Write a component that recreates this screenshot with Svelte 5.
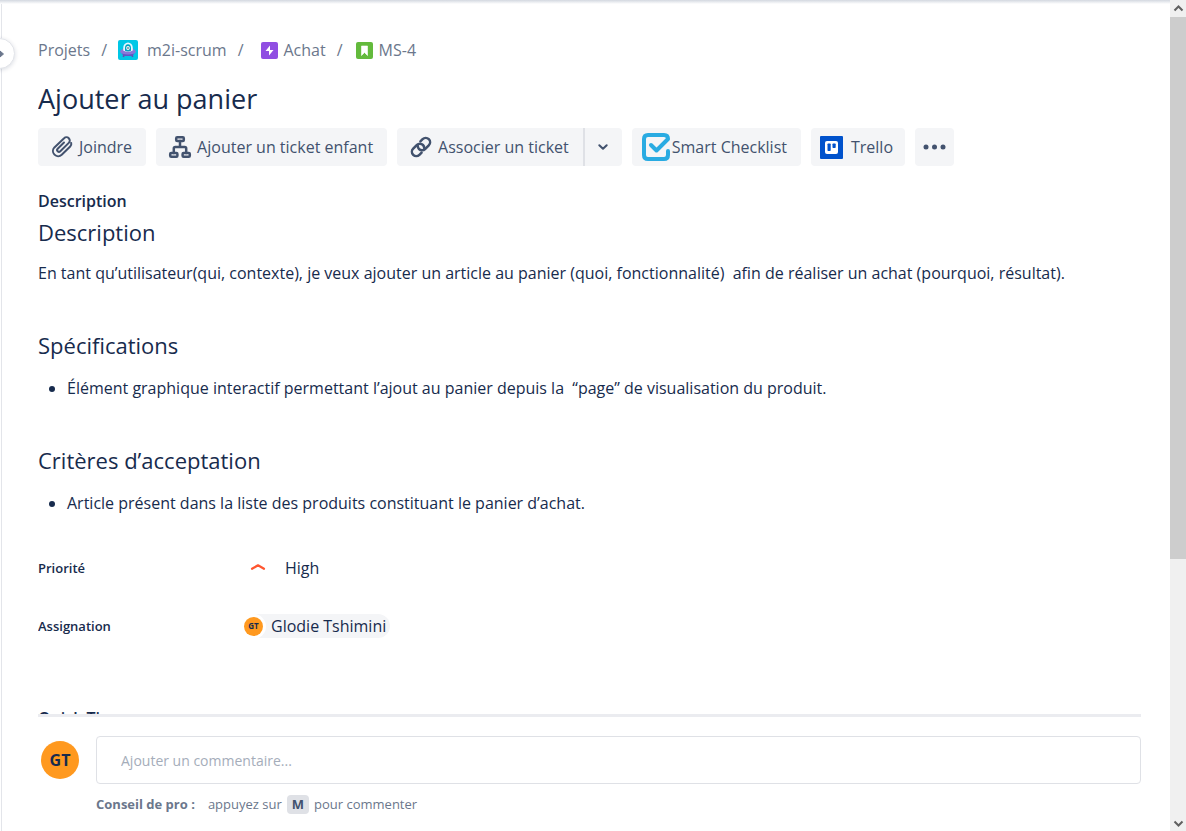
<script>
  let comment = $state('');
</script>

<div class="shell">
  <div class="rail">
    <button class="toggle" aria-label="Développer la barre latérale">
      <svg width="8" height="10" viewBox="0 0 8 10"><path d="M0 2v6l3.500-3z" /></svg>
    </button>
  </div>

  <main>
    <div class="content">
      <nav class="crumbs" aria-label="Fil d’Ariane">
        <a href="#projets">Projets</a>
        <span class="sep">/</span>
        <a class="project" href="#m2i">
          <svg width="20" height="20" viewBox="0 0 20 20">
            <rect width="20" height="20" rx="2" fill="#00c7e6" />
            <path d="M6 14l-.6 3M14 14l.6 3" stroke="#5e4db2" stroke-width="1.600" />
            <ellipse cx="10" cy="11.500" rx="7.800" ry="3.600" fill="#8777d9" />
            <path d="M3.500 13.500q6.500 2 13 0L14 16H6z" fill="#6554c0" />
            <path d="M5.200 10.500V8a4.800 5.500 0 0 1 9.600 0v2.500q-4.800 2.500-9.600 0z" fill="#eaf6ff" />
            <path d="M7 10.800V8a3 3.800 0 0 1 6 0v2.800q-3 1.200-6 0z" fill="#00a3bf" />
            <ellipse cx="10" cy="8" rx="1.800" ry="2.100" fill="#fff" />
            <circle cx="10" cy="8" r=".8" fill="#253858" />
          </svg>
          m2i-scrum
        </a>
        <span class="sep">/</span>
        <a class="ticket epic" href="#achat">
          <svg width="17" height="17" viewBox="0 0 17 17">
            <rect width="17" height="17" rx="2" fill="#904ee2" />
            <path d="M9 3.500 4.500 9H8v4.500L12.500 8H9z" fill="#fff" />
          </svg>
          Achat
        </a>
        <span class="sep">/</span>
        <a class="ticket story" href="#ms-4">
          <svg width="17" height="17" viewBox="0 0 17 17">
            <rect width="17" height="17" rx="2" fill="#63ba3c" />
            <path d="M5.500 4h6v9.500l-3-3-3 3z" fill="#fff" stroke="#fff" stroke-linejoin="round" stroke-width=".6" />
          </svg>
          MS-4
        </a>
      </nav>

      <h1>Ajouter au panier</h1>

      <div class="actions">
        <button class="action">
          <svg width="24" height="24" viewBox="0 0 24 24" class="line">
            <path d="M14 7.500 7.700 13.700a1.800 1.800 0 0 0 2.600 2.600l8.500-8.400a3.300 3.300 0 0 0-4.700-4.700L4.400 12.400a5.200 5.200 0 0 0 7.300 7.400l8.500-8.300q1.500-1.500 1-3.500" />
          </svg>
          Joindre
        </button>
        <button class="action">
          <svg width="24" height="24" viewBox="0 0 24 24" class="line tree">
            <rect x="8.200" y="2.200" width="7.600" height="3.800" rx="1" />
            <rect x="2.200" y="18" width="7.200" height="3.800" rx="1" />
            <rect x="14.600" y="18" width="7.200" height="3.800" rx="1" />
            <path d="M12 6v6M5.800 18v-4.500q0-1.500 1.500-1.500h9.400q1.500 0 1.500 1.500V18" />
          </svg>
          Ajouter un ticket enfant
        </button>
        <div class="split">
          <button class="action">
            <svg width="24" height="24" viewBox="0 0 24 24" class="line link">
              <path d="M12.600 17.600 10.400 19.800a4.300 4.300 0 0 1-6.200-6.200l3.700-3.600a4.300 4.300 0 0 1 6.100 0q1.200 1.200 1.200 3" />
              <path d="M11.400 6.400 13.600 4.200a4.300 4.300 0 0 1 6.200 6.200l-3.700 3.600a4.300 4.300 0 0 1-6.100 0q-1.200-1.200-1.200-3" />
            </svg>
            Associer un ticket
          </button>
          <button class="more" aria-label="Autres options d’association">
            <svg width="12" height="8" viewBox="0 0 12 8" class="line"><path d="M2.300 2.200 6 5.800l3.700-3.600" /></svg>
          </button>
        </div>
        <button class="action smart">
          <svg width="28" height="28" viewBox="0 0 28 28" fill="none" stroke="#29abe2" stroke-linecap="round" stroke-linejoin="round" stroke-width="4">
            <path d="M26 18v4q0 4-4 4H6q-4 0-4-4V6q0-4 4-4h16q4 0 4 4L14.500 17.500 9 12" />
          </svg>
          Smart Checklist
        </button>
        <button class="action trello">
          <svg width="23" height="23" viewBox="0 0 23 23">
            <rect width="23" height="23" rx="1" fill="#0052cc" />
            <rect x="5" y="5" width="13" height="13" rx="2" fill="#fff" />
            <rect x="7.500" y="7.500" width="3.200" height="7.500" rx=".7" fill="#0052cc" />
            <rect x="12.500" y="7.500" width="3.200" height="4.500" rx=".7" fill="#0052cc" />
          </svg>
          Trello
        </button>
        <button class="more" aria-label="Autres actions">
          <svg width="23" height="6" viewBox="0 0 23 6" fill="#42526e">
            <circle cx="3" cy="3" r="2.500" /><circle cx="11.500" cy="3" r="2.500" /><circle cx="20" cy="3" r="2.500" />
          </svg>
        </button>
      </div>

      <h2 class="label">Description</h2>
      <section class="first">
        <h3>Description</h3>
        <p>En tant qu’utilisateur(qui, contexte), je veux ajouter un article au panier (quoi, fonctionnalité)&nbsp; afin de réaliser un achat (pourquoi, résultat).</p>
      </section>
      <section>
        <h3>Spécifications</h3>
        <ul><li>Élément graphique interactif permettant l’ajout au panier depuis la&nbsp; “page” de visualisation du produit.</li></ul>
      </section>
      <section>
        <h3>Critères d’acceptation</h3>
        <ul><li>Article présent dans la liste des produits constituant le panier d’achat.</li></ul>
      </section>

      <dl>
        <dt>Priorité</dt>
        <dd class="priority">
          <svg width="16" height="10" viewBox="0 0 16 10"><path d="M2 5.800 8 2.300l6 3.500" fill="none" stroke="#ff5630" stroke-width="2.200" stroke-linecap="round" stroke-linejoin="round" /></svg>
          High
        </dd>
        <dt>Assignation</dt>
        <dd><span class="person"><span class="avatar small">GT</span>Glodie Tshimini</span></dd>
      </dl>
      <h2 class="label tips">Quick Tips</h2>
    </div>

    <footer>
      <span class="avatar">GT</span>
      <div class="composer">
        <input type="text" aria-label="Commentaire" placeholder="Ajouter un commentaire..." bind:value={comment} />
        <div class="hint"><strong>Conseil de pro :</strong><span>appuyez sur</span><kbd>M</kbd><span>pour commenter</span></div>
      </div>
    </footer>
  </main>

  <div class="scrollbar" aria-hidden="true">
    <svg width="16" height="17" viewBox="0 0 16 17"><path d="M4.500 10.500 8.500 6.500l4 4" /></svg>
    <div class="track"><div class="thumb"></div></div>
    <svg width="16" height="17" viewBox="0 0 16 17"><path d="M4.500 7.500l4 4 4-4" /></svg>
  </div>
</div>

<style>
  :global(body) { margin: 0; }
  .shell {
    position: relative;
    display: flex;
    height: 100vh;
    overflow: hidden;
    background: #fff;
    color: #172b4d;
    font: 16px/24px "Open Sans", "Noto Sans", sans-serif;
  }
  .shell::before {
    content: "";
    position: absolute;
    inset: 0 16px auto 0;
    height: 4px;
    background: linear-gradient(#d3d8e0, #fff);
  }
  .rail { flex: none; width: 1px; border-right: 1px solid #e3e5ea; }
  .toggle {
    position: absolute;
    left: -16px;
    top: 38px;
    width: 31px;
    height: 31px;
    padding: 0 0 0 15px;
    display: flex;
    align-items: center;
    border: 1px solid #e3e5ea;
    border-radius: 50%;
    background: #fff;
    box-shadow: 0 1px 4px #091e4226;
  }
  .toggle path { fill: #6b778c; stroke: #6b778c; stroke-linejoin: round; }
  svg { flex: none; }
  main { flex: 1; min-width: 0; display: flex; flex-direction: column; padding: 0 29px 0 36px; }
  .content { flex: 1; min-height: 0; overflow: hidden; padding-top: 38px; box-sizing: border-box; }
  .crumbs { display: flex; align-items: center; color: #6b778c; }
  .crumbs a { display: flex; align-items: center; color: inherit; text-decoration: none; }
  .sep { margin: 0 11px; }
  .project { gap: 9px; }
  .ticket { gap: 6px; }
  .epic { margin-left: 6px; }
  .story { margin-left: 2px; }
  h1, h2, h3, p, ul, dl, dd { margin: 0; }
  h1 { margin-top: 19px; font-size: 27px; line-height: 36px; font-weight: 400; }
  .actions { display: flex; gap: 10px; margin-top: 11px; }
  button { font: inherit; color: #42526e; cursor: pointer; }
  .action, .more {
    display: flex;
    align-items: center;
    justify-content: center;
    gap: 5px;
    height: 38px;
    padding: 0 14px 0 12px;
    border: 0;
    border-radius: 4px;
    background: #f4f5f7;
    white-space: nowrap;
  }
  .more { width: 39px; padding: 0; }
  .line { fill: none; stroke: #42526e; stroke-width: 2; stroke-linecap: round; stroke-linejoin: round; }
  .link, .tree { stroke-width: 2.500; }
  .split { display: flex; }
  .split .action { border-radius: 4px 0 0 4px; }
  .split .more { border-left: 2px solid #dfe1e6; border-radius: 0 4px 4px 0; }
  .smart { gap: 2px; padding-left: 10px; }
  .trello { gap: 8px; padding: 0 12px 0 9px; }
  .label { margin-top: 23px; font-size: 16px; line-height: 24px; font-weight: 600; }
  section { margin-top: 46px; }
  .first { margin-top: 5px; }
  h3 { font-size: 22px; line-height: 28px; font-weight: 400; }
  p { margin-top: 15px; }
  ul { margin-top: 17px; padding-left: 29px; }
  dl { display: grid; grid-template-columns: 206px 1fr; row-gap: 34px; margin-top: 41px; }
  dt { font-size: 13px; font-weight: 600; }
  .priority { display: flex; align-items: center; gap: 19px; padding-left: 6px; }
  .person { display: inline-flex; vertical-align: top; align-items: center; gap: 8px; padding-right: 4px; border-radius: 12px; background: #f4f5f7; }
  .avatar {
    flex: none;
    display: flex;
    align-items: center;
    justify-content: center;
    width: 38px;
    height: 38px;
    margin: 5px 17px 0 3px;
    border-radius: 50%;
    background: #ff991f;
    font-weight: 700;
  }
  .small { width: 19px; height: 19px; margin: 0; font-size: 8px; box-shadow: 0 0 0 3px #fff; }
  .tips { margin-top: 68px; }
  footer { display: flex; padding: 19px 0 15px; border-top: 3px solid #ebecf0; }
  .composer { flex: 1; min-width: 0; }
  input {
    display: block;
    box-sizing: border-box;
    width: 100%;
    height: 48px;
    padding: 0 24px;
    border: 1px solid #dfe1e6;
    border-radius: 4px;
    color: #172b4d;
    font: inherit;
    font-size: 14px;
  }
  input::placeholder { color: #a5adba; opacity: 1; }
  .hint { display: flex; align-items: center; margin-top: 8px; color: #6b778c; font-size: 13px; }
  strong { margin-right: 13px; }
  kbd { margin: 0 5px; padding: 0 5px; border-radius: 4px; background: #dfe1e6; color: #42526e; font: 700 13px/19px "Open Sans", sans-serif; }
  .scrollbar { flex: none; width: 16px; display: flex; flex-direction: column; background: #f0f0f0; }
  .scrollbar path { fill: none; stroke: #606060; stroke-width: 2; }
  .track { flex: 1; }
  .thumb { height: 68%; background: #cdcdcd; }
</style>
